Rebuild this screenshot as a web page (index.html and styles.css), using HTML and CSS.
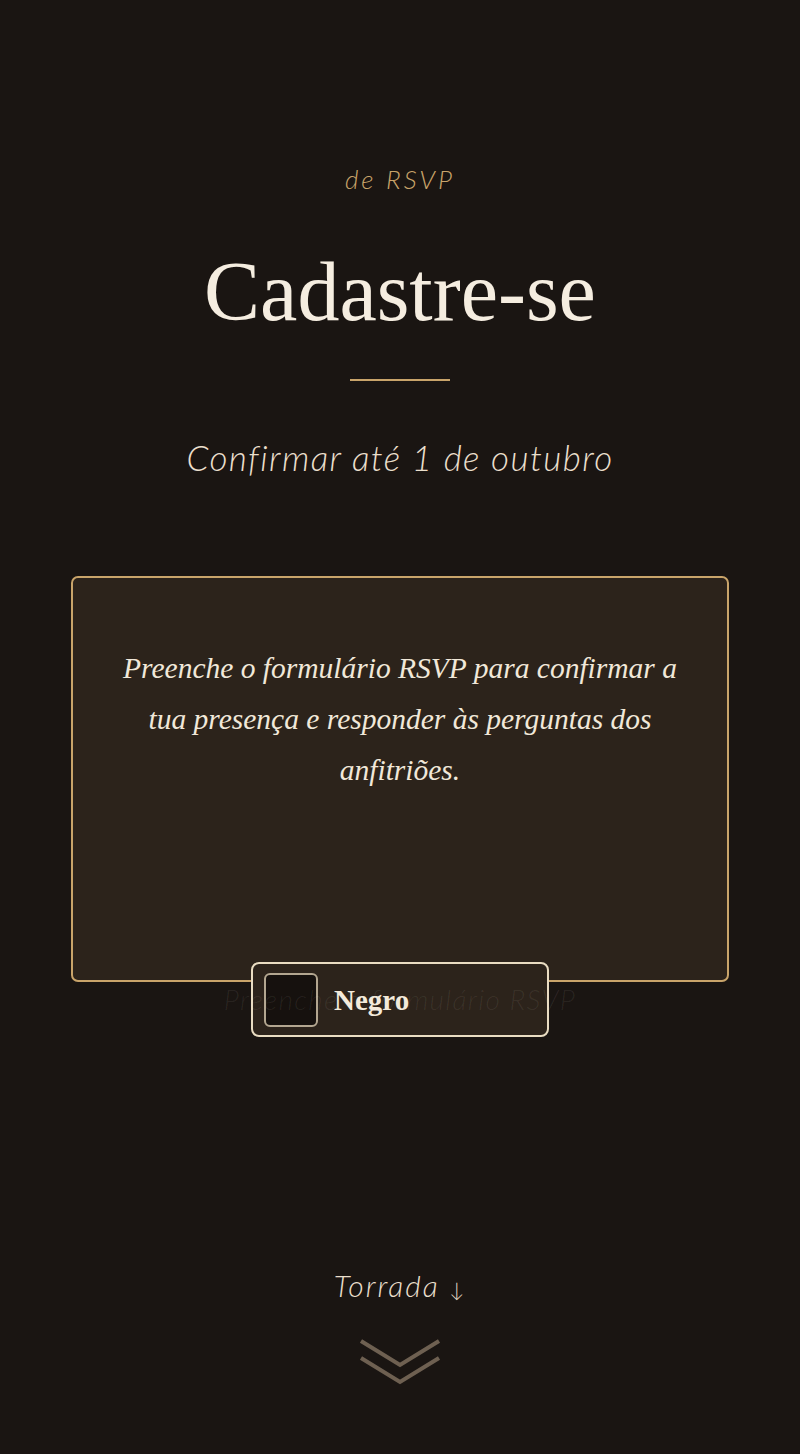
FILE: index.html
```html
<!DOCTYPE html>
<html lang="pt">
<head>
<meta charset="utf-8">
<link rel="stylesheet" href="styles.css">
</head>
<body>
<main class="page">
  <p class="eyebrow">de RSVP</p>
  <h1 class="title">Cadastre-se</h1>
  <div class="rule"></div>
  <p class="deadline">Confirmar até 1 de outubro</p>

  <section class="form-area">
    <div class="card">
      <p class="card-text">Preenche o formulário RSVP para confirmar a tua presença e responder às perguntas dos anfitriões.</p>
    </div>
    <div class="below">
      <p class="ghost">Preenche o formulário RSVP</p>
      <div class="option">
        <span class="swatch"></span>
        <span class="option-label">Negro</span>
      </div>
    </div>
  </section>

  <div class="footer">
    <p class="next">Torrada <span class="arrow">↓</span></p>
    <svg class="chevrons" width="84" height="52" viewBox="0 0 84 52" aria-hidden="true">
      <polyline points="3,4 42,28 81,4" fill="none" stroke="#6e6051" stroke-width="4"/>
      <polyline points="3,21 42,45 81,21" fill="none" stroke="#6e6051" stroke-width="4"/>
    </svg>
  </div>
</main>
</body>
</html>
```

FILE: styles.css
```css
html, body {
  margin: 0;
  padding: 0;
  background: #1a1512;
}

.page {
  display: flex;
  flex-direction: column;
  align-items: center;
  padding-top: 162px;
  min-height: 1454px;
  box-sizing: border-box;
}

.eyebrow {
  margin: 0;
  font-family: "Lato", sans-serif;
  font-style: italic;
  font-weight: 300;
  font-size: 26px;
  line-height: 34px;
  letter-spacing: 3px;
  color: #c9a46a;
}

.title {
  margin: 46px 0 0;
  font-family: "Liberation Serif", serif;
  font-weight: 400;
  font-size: 84px;
  line-height: 100px;
  color: #f5ede0;
}

.rule {
  margin-top: 37px;
  width: 100px;
  height: 2px;
  background: #c9a46a;
}

.deadline {
  margin: 56px 0 0;
  font-family: "Lato", sans-serif;
  font-style: italic;
  font-weight: 300;
  font-size: 35px;
  line-height: 40px;
  letter-spacing: 1.4px;
  color: #eadfcc;
}

.form-area {
  margin-top: 99px;
  width: 658px;
  display: flex;
  flex-direction: column;
  align-items: center;
}

.card {
  box-sizing: border-box;
  width: 658px;
  height: 406px;
  border: 2px solid #c9a46a;
  border-radius: 7px;
  background: #2c231b;
  padding: 65px 44px 0;
}

.card-text {
  margin: 0;
  text-align: center;
  font-family: "Liberation Serif", serif;
  font-style: italic;
  font-size: 29.5px;
  line-height: 51px;
  color: #f1e8d9;
}

.below {
  position: relative;
  width: 100%;
  height: 40px;
  display: flex;
  justify-content: center;
}

.ghost {
  position: relative;
  z-index: 2;
  margin: 0;
  font-family: "Lato", sans-serif;
  font-style: italic;
  font-weight: 300;
  font-size: 28px;
  line-height: 34px;
  letter-spacing: 1.3px;
  color: rgba(255, 245, 230, 0.07);
}

.option {
  position: absolute;
  z-index: 1;
  top: -20px;
  left: 180px;
  box-sizing: border-box;
  width: 298px;
  height: 75px;
  border: 2px solid #e9dcc2;
  border-radius: 8px;
  background: #2c231b;
  display: flex;
  align-items: center;
  padding-left: 11px;
  gap: 16px;
}

.swatch {
  box-sizing: border-box;
  width: 54px;
  height: 54px;
  border: 2px solid #b3a690;
  border-radius: 6px;
  background: #16110e;
}

.option-label {
  font-family: "Liberation Serif", serif;
  font-weight: 700;
  font-size: 29px;
  color: #f3eadb;
  padding-top: 2px;
}

.footer {
  margin-top: 245px;
  display: flex;
  flex-direction: column;
  align-items: center;
}

.next {
  margin: 0;
  font-family: "Lato", sans-serif;
  font-style: italic;
  font-weight: 300;
  font-size: 30px;
  line-height: 36px;
  letter-spacing: 2px;
  color: #eadfcc;
}

.arrow {
  font-style: normal;
  font-size: 20px;
}

.chevrons {
  margin-top: 30px;
  display: block;
}
```
